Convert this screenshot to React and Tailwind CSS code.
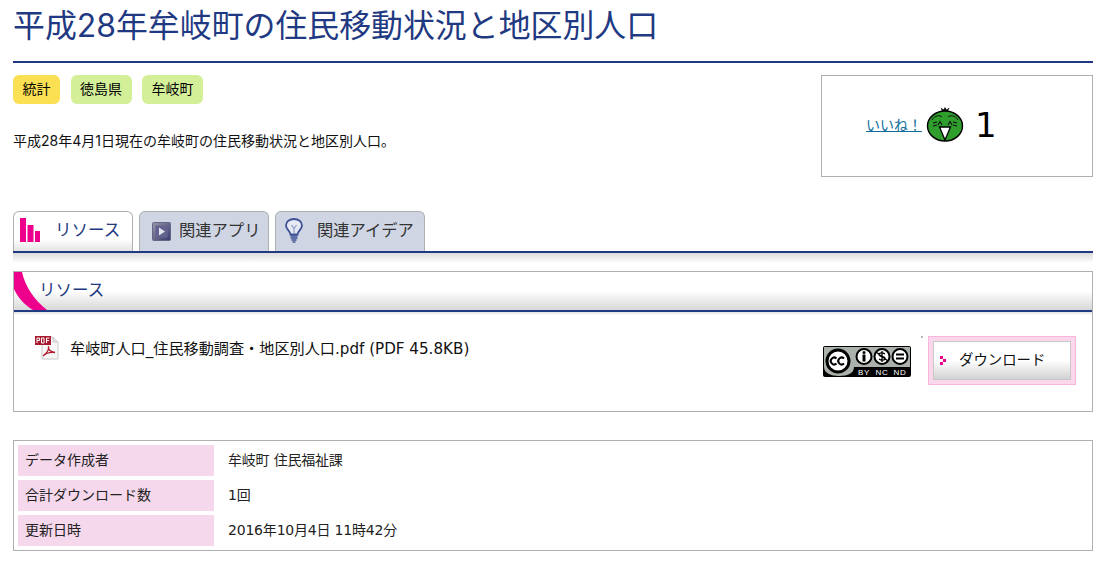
import { Fragment } from 'react'

const FONT = 'Inter, "Noto Sans CJK JP", sans-serif'

const INFO = [
  ['データ作成者', '牟岐町 住民福祉課'],
  ['合計ダウンロード数', '1回'],
  ['更新日時', '2016年10月4日 11時42分'],
]

function BarsIcon() {
  return (
    <svg width="20" height="24" viewBox="0 0 20 24" className="mb-[3px] shrink-0">
      <rect x="0" y="0" width="6" height="24" fill="#ec008c" />
      <rect x="7.5" y="7" width="6" height="17" fill="#ec008c" />
      <rect x="15" y="13" width="5" height="11" fill="#ec008c" />
    </svg>
  )
}

function PlayIcon() {
  return (
    <svg width="19" height="19" viewBox="0 0 19 19" className="shrink-0">
      <defs>
        <linearGradient id="playBg" x1="0" y1="0" x2="1" y2="1">
          <stop offset="0" stopColor="#9a98a8" />
          <stop offset="1" stopColor="#38386c" />
        </linearGradient>
      </defs>
      <rect x="0.5" y="0.5" width="18" height="18" rx="1" fill="url(#playBg)" stroke="#66668a" />
      <rect x="3.5" y="3.5" width="12" height="12" fill="#63638f" />
      <path d="M7 5.5 L13 9.5 L7 13.5 Z" fill="#e4e4ee" />
    </svg>
  )
}

function BulbIcon() {
  return (
    <svg width="18" height="25" viewBox="0 0 18 25" fill="none" className="mb-[2px] shrink-0">
      <path d="M5.5 16.5 C5.5 13 1 11.5 1 7.5 C1 3.5 4.6 1 9 1 C13.4 1 17 3.5 17 7.5 C17 11.5 12.5 13 12.5 16.5 Z" fill="#e6eaf4" stroke="#3f4f96" strokeWidth="1.8" />
      <path d="M6.5 7 L9 10.5 L11.5 7 M9 10.5 V16" stroke="#8a94c0" strokeWidth="1.1" />
      <path d="M5.5 18 H12.5 M5.5 20 H12.5 M6.5 22 H11.5" stroke="#3f4f96" strokeWidth="1.5" />
      <path d="M7.5 24 H10.5" stroke="#3f4f96" strokeWidth="1.4" />
    </svg>
  )
}

function BirdIcon() {
  return (
    <svg width="38" height="36" viewBox="0 0 38 36" className="shrink-0">
      <path d="M16 5 L14.5 1.5 L17.5 3.5 L19 1 L20.5 3.5 L23.5 1.5 L22 5" fill="#111" />
      <ellipse cx="19" cy="20" rx="17.5" ry="15" fill="#2f9e2d" stroke="#000" strokeWidth="1.4" />
      <path d="M6 14 C9 9 14 9 16 11 M32 14 C29 9 24 9 22 11" stroke="#111" strokeWidth="1" fill="none" />
      <path d="M7 17 L11 16 M7 20 L11 19 M27 16 L31 17 M27 19 L31 20" stroke="#111" strokeWidth="1.2" />
      <path d="M12 19 L14 15.5 L16 19 M22 19 L24 15.5 L26 19" stroke="#111" strokeWidth="1.1" fill="none" />
      <path d="M13.5 21 L24.5 21 L19 34 Z" fill="#fff" stroke="#000" strokeWidth="1.3" />
    </svg>
  )
}

function PdfIcon() {
  return (
    <svg width="24" height="24" viewBox="0 0 24 24" className="shrink-0">
      <path d="M7 1 H18 L23 6 V23 H7 Z" fill="#f7f7f7" stroke="#c9c9c9" />
      <path d="M18 1 V6 H23" fill="#e4e4e4" stroke="#c9c9c9" />
      <rect x="0" y="0" width="16" height="9" fill="#a6192e" />
      <path d="M2 7 V2 H4.5 V4.5 H2 M6.5 7 V2 H9 V7 H6.5 M11.5 7 V2 H14.5 M11.5 4.5 H14" stroke="#fff" strokeWidth="1" fill="none" />
      <path d="M8 20 C12 17 14 13 13.5 10.5 C13 13 15 16 20 16.5 C16 16 11 17 8 20 Z" fill="none" stroke="#b01c2e" strokeWidth="1.4" />
    </svg>
  )
}

function CcBadge() {
  return (
    <svg width="88" height="31" viewBox="0 0 88 31" className="shrink-0">
      <rect width="88" height="31" rx="2" fill="#000" />
      <rect x="1" y="1" width="86" height="20" fill="#aab2ab" />
      <path d="M1 1 H31 V21 C31 27 25 30 16 30 C8 30 1 27 1 21 Z" fill="#aab2ab" />
      <circle cx="15" cy="15" r="11" fill="#fff" stroke="#000" strokeWidth="3" />
      <path d="M13.5 12.5 A3.4 3.4 0 1 0 13.5 17.5 M21 12.5 A3.4 3.4 0 1 0 21 17.5" fill="none" stroke="#000" strokeWidth="2" />
      <circle cx="41" cy="10.5" r="7.5" fill="#fff" stroke="#000" strokeWidth="2" />
      <circle cx="41" cy="6.5" r="1.5" fill="#000" />
      <rect x="39.5" y="8.5" width="3" height="7" fill="#000" />
      <circle cx="59" cy="10.5" r="7.5" fill="#fff" stroke="#000" strokeWidth="2" />
      <path d="M62 8 C60 6.5 56 6.5 56 8.5 C56 11 62 10 62 12.5 C62 14.5 58 14.5 56 13 M59 5 V16 M53 6 L65 15" stroke="#000" strokeWidth="1.3" fill="none" />
      <circle cx="77" cy="10.5" r="7.5" fill="#fff" stroke="#000" strokeWidth="2" />
      <rect x="73" y="7.5" width="8" height="2" fill="#000" />
      <rect x="73" y="11.5" width="8" height="2" fill="#000" />
      <text x="41" y="29" fontSize="8" letterSpacing="0.6" fill="#fff" textAnchor="middle" fontFamily="'Liberation Sans', sans-serif">BY</text>
      <text x="59" y="29" fontSize="8" letterSpacing="0.6" fill="#fff" textAnchor="middle" fontFamily="'Liberation Sans', sans-serif">NC</text>
      <text x="77" y="29" fontSize="8" letterSpacing="0.6" fill="#fff" textAnchor="middle" fontFamily="'Liberation Sans', sans-serif">ND</text>
    </svg>
  )
}

function Tag({ children, yellow }) {
  return (
    <span className={`flex h-[29px] items-center rounded-md px-[9.5px] pb-[2px] text-[14px] text-black ${yellow ? 'bg-[#fbe053]' : 'bg-[#d3ef98]'}`}>
      {children}
    </span>
  )
}

export default function App() {
  return (
    <div className="h-[562px] w-[1111px] overflow-hidden bg-white pl-[13px] pr-[18px]" style={{ fontFamily: FONT }}>
      <h1 className="h-[63px] border-b-2 border-[#1f3a82] pt-[5px] text-[31.9px] leading-[42px] font-normal whitespace-nowrap text-[#1f3a82]">
        平成28年牟岐町の住民移動状況と地区別人口
      </h1>

      <div className="mt-3 flex h-[102px] justify-between">
        <div>
          <div className="flex gap-[10.5px]">
            <Tag yellow>統計</Tag>
            <Tag>徳島県</Tag>
            <Tag>牟岐町</Tag>
          </div>
          <p className="mt-[25px] text-[14px] leading-[24px] text-[#111]">平成28年4月1日現在の牟岐町の住民移動状況と地区別人口。</p>
        </div>
        <div className="flex h-[102px] w-[272px] items-start border border-[#b0b0b0] pt-[30px] pl-[44px]">
          <a className="mt-[10px] text-[14px] leading-[18px] text-[#0f6d9c] underline">いいね！</a>
          <span className="ml-[4px]"><BirdIcon /></span>
          <span className="ml-[11px] font-['DejaVu_Sans'] text-[34px] leading-[38px] text-black">1</span>
        </div>
      </div>

      <div className="mt-[34px] flex h-[40px] items-end">
        <div className="flex h-[40px] w-[120px] items-center rounded-t-md border border-b-0 border-[#b0b0b0] bg-gradient-to-b from-white from-70% to-[#e4e4e4] pl-[6px]">
          <BarsIcon />
          <span className="mb-[3px] ml-[15px] text-[16.5px] text-[#1f3a82]">リソース</span>
        </div>
        <div className="ml-[6px] flex h-[40px] w-[130px] items-center rounded-t-md border border-b-0 border-[#b0b0b0] bg-[#cfd5e3] pl-[12px]">
          <PlayIcon />
          <span className="mb-[3px] ml-[8px] text-[16.3px] text-[#333]">関連アプリ</span>
        </div>
        <div className="ml-[6px] flex h-[40px] w-[150px] items-center rounded-t-md border border-b-0 border-[#b0b0b0] bg-[#cfd5e3] pl-[9px]">
          <BulbIcon />
          <span className="mb-[3px] ml-[14px] text-[16.3px] text-[#333]">関連アイデア</span>
        </div>
      </div>
      <div className="h-[2px] bg-[#1f3a82]" />
      <div className="h-[10px] bg-gradient-to-b from-[#dcdcdc] to-white" />

      <section className="mt-[8px] h-[141px] border border-[#b0b0b0]">
        <div className="relative h-[38px] overflow-hidden bg-gradient-to-b from-white from-50% to-[#d8d8d8]">
          <svg width="34" height="38" viewBox="0 0 34 38" className="absolute top-0 left-0">
            <path d="M0 0 H8 C11 14 20 28 33 38 H19 C10 33 3 24 0 17 Z" fill="#ec008c" />
          </svg>
          <span className="absolute top-[4px] left-[25px] text-[16.5px] leading-[28px] text-[#1f3a82]">リソース</span>
        </div>
        <div className="h-[2px] bg-[#1f3a82]" />
        <div className="h-[3px] bg-gradient-to-b from-[#e0e0e0] to-white" />
        <div className="flex items-start justify-between pr-[16px]">
          <div className="mt-[21px] ml-[21px] flex items-start">
            <PdfIcon />
            <span className="ml-[11px] font-['DejaVu_Sans','Noto_Sans_CJK_JP',sans-serif] text-[15.15px] leading-[26px] text-[#111]">牟岐町人口_住民移動調査・地区別人口.pdf (PDF 45.8KB)</span>
          </div>
          <div className="flex items-start">
            <span className="mt-[31px]"><CcBadge /></span>
            <div className="mt-[21px] ml-[10px] h-[2px] w-[2px] bg-[#b8b8b8]" />
            <div className="mt-[21px] ml-[5px] h-[49px] w-[148px] border border-[#f9b5dc] bg-[#fbd7ec] p-[4px]">
              <div className="flex h-full items-center border border-[#c8c8c8] bg-gradient-to-b from-white from-50% to-[#d2d2d2] pl-[6px]">
                <svg width="8" height="10" viewBox="0 0 8 10" className="shrink-0">
                  <rect x="0" y="0" width="3" height="3" fill="#ec008c" />
                  <rect x="3" y="3" width="3" height="3" fill="#ec008c" />
                  <rect x="0" y="6" width="3" height="3" fill="#ec008c" />
                </svg>
                <span className="mb-[2px] ml-[11px] text-[14.4px] text-[#111]">ダウンロード</span>
              </div>
            </div>
          </div>
        </div>
      </section>

      <section className="mt-[28px] grid h-[111px] grid-cols-[196px_1fr] gap-y-[4px] border border-[#b0b0b0] p-[4px]">
        {INFO.map(([label, value]) => (
          <Fragment key={label}>
            <div className="flex h-[31px] items-center bg-[#f6d8ec] pb-[3px] pl-[7px] text-[14px] text-[#222]">{label}</div>
            <div className="flex h-[31px] items-center pb-[1px] pl-[14px] font-['DejaVu_Sans','Noto_Sans_CJK_JP',sans-serif] text-[14px] tracking-[-0.2px] text-[#222]">{value}</div>
          </Fragment>
        ))}
      </section>
    </div>
  )
}
